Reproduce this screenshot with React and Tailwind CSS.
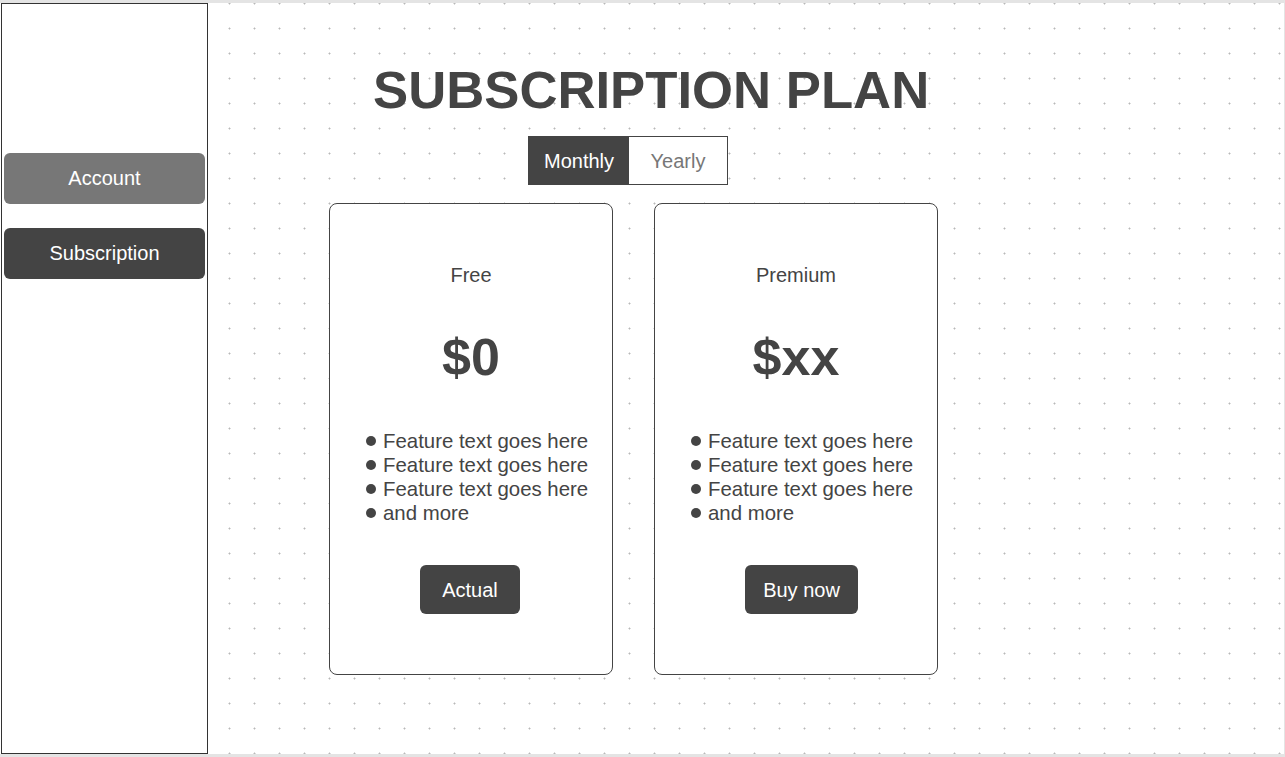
// App.jsx
import React from "react";

const features = [
  "Feature text goes here",
  "Feature text goes here",
  "Feature text goes here",
  "and more",
];

const PlanCard = ({ name, price, action, actionWidth }) => {
  return (
    <div className="w-[284px] h-[472px] border border-[#444] rounded-[8px] bg-white flex flex-col pt-[59px]">
      <div className="text-center text-[20px] leading-[24px] text-[#444]">{name}</div>
      <div className="mt-[44px] text-center text-[52px] leading-[52px] font-bold text-[#444]">
        {price}
      </div>
      <ul className="mt-[46px] ml-[36px] text-[20.4px] leading-[24px] text-[#444]">
        {features.map((f, i) => (
          <li key={i} className="flex items-center">
            <span className="inline-block w-[10px] h-[10px] rounded-full bg-[#444] mr-[7px]" />
            <span>{f}</span>
          </li>
        ))}
      </ul>
      <button
        className={`mt-[40px] ml-[90px] h-[49px] rounded-[6px] bg-[#444] text-white text-[20px] ${actionWidth}`}
      >
        {action}
      </button>
    </div>
  );
};

export default function App() {
  return (
    <div className="w-[1285px] h-[757px] bg-[#e4e4e4] pt-[3px] font-['Liberation_Sans',Arial,sans-serif] overflow-hidden">
      <div className="flex w-[1284px] h-[751px] bg-white">
        {/* Sidebar */}
        <aside className="ml-px w-[207px] h-[751px] border border-[#333] bg-white px-[2px] pt-[149px] flex flex-col gap-[24px]">
          <button className="h-[51px] w-full rounded-[6px] bg-[#777] text-white text-[20px] pb-px">
            Account
          </button>
          <button className="h-[51px] w-full rounded-[6px] bg-[#444] text-white text-[20px] pb-px">
            Subscription
          </button>
        </aside>

        {/* Main canvas */}
        <main className="flex-1 h-full bg-[radial-gradient(circle,#b8b8b8_0.9px,transparent_1.1px)] bg-[size:25px_25px] bg-[position:9px_13px]">
          <div className="ml-[121px] w-[609px] pt-[61px] flex flex-col">
            <h1 className="ml-[44px] whitespace-nowrap text-[52.7px] leading-[52px] font-bold text-[#444]">
              SUBSCRIPTION PLAN
            </h1>

            <div className="mt-[20px] ml-[199px] flex w-[200px] h-[49px] border border-[#444] bg-white">
              <button className="w-[100px] h-full bg-[#444] text-white text-[20px] pt-px">
                Monthly
              </button>
              <button className="flex-1 h-full text-[#777] text-[20px] pt-px">Yearly</button>
            </div>

            <div className="mt-[18px] flex gap-[41px]">
              <PlanCard name="Free" price="$0" action="Actual" actionWidth="w-[100px]" />
              <PlanCard name="Premium" price="$xx" action="Buy now" actionWidth="w-[113px]" />
            </div>
          </div>
        </main>
      </div>
    </div>
  );
}
